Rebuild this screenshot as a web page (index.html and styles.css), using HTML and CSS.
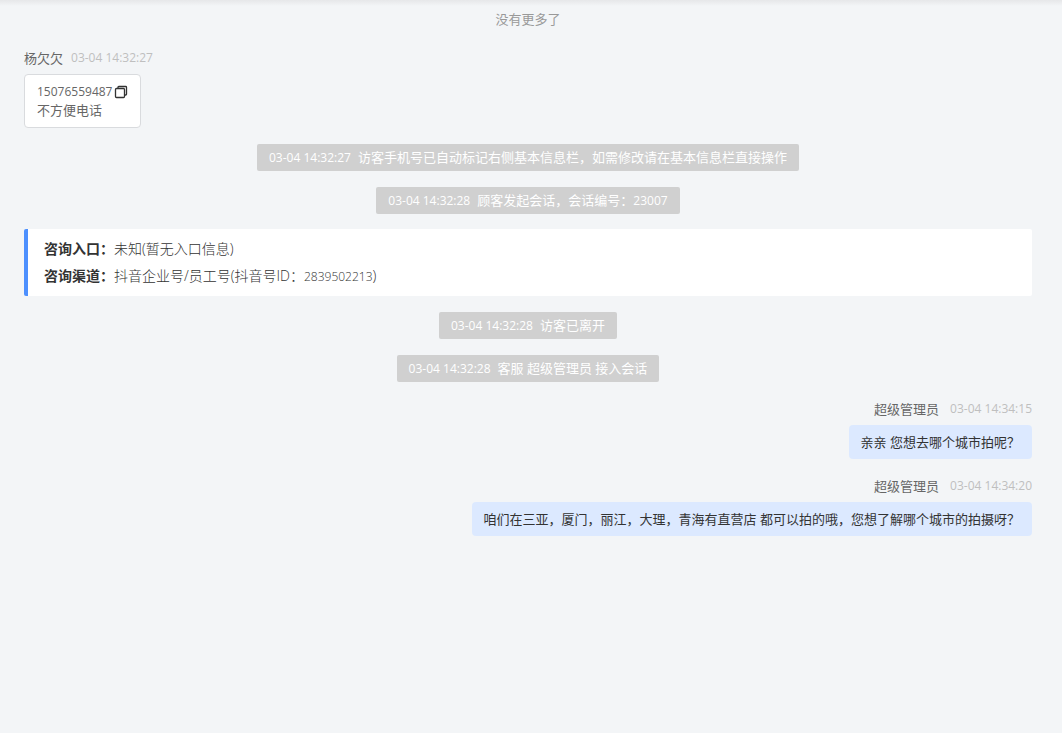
FILE: index.html
```html
<!DOCTYPE html>
<html lang="zh-CN">
<head>
  <meta charset="UTF-8">
  <title>会话记录</title>
  <link rel="stylesheet" href="styles.css">
</head>
<body>

  <main class="chat">
    <p class="no-more">没有更多了</p>

    <div class="message">
      <div class="meta">
        <span class="name">杨欠欠</span>
        <time>03-04 14:32:27</time>
      </div>
      <div class="bubble visitor">
        <div class="phone">
          <span class="num">15076559487</span>
          <button type="button" class="copy" aria-label="复制">
            <svg width="14" height="14" viewBox="0 0 14 14" fill="none" stroke="#333" stroke-width="1.3">
              <rect x="1.5" y="3.5" width="9" height="9" rx="1"/>
              <path d="M4 3.5V2.3Q4 1.5 4.8 1.5H11.7Q12.5 1.5 12.5 2.3V9.2Q12.5 10 11.7 10H10.5"/>
            </svg>
          </button>
        </div>
        <div>不方便电话</div>
      </div>
    </div>

    <div class="notice"><time>03-04 14:32:27</time>访客手机号已自动标记右侧基本信息栏，如需修改请在基本信息栏直接操作</div>
    <div class="notice"><time>03-04 14:32:28</time>顾客发起会话，会话编号：<span class="num">23007</span></div>

    <dl class="info">
      <div class="info-row">
        <dt>咨询入口：</dt>
        <dd>未知(暂无入口信息)</dd>
      </div>
      <div class="info-row">
        <dt>咨询渠道：</dt>
        <dd>抖音企业号/员工号(抖音号ID：<span class="num">2839502213</span>)</dd>
      </div>
    </dl>

    <div class="notice"><time>03-04 14:32:28</time>访客已离开</div>
    <div class="notice"><time>03-04 14:32:28</time>客服 超级管理员 接入会话</div>

    <div class="message mine">
      <div class="meta">
        <span class="name">超级管理员</span>
        <time>03-04 14:34:15</time>
      </div>
      <div class="bubble">亲亲 您想去哪个城市拍呢？</div>
    </div>

    <div class="message mine">
      <div class="meta">
        <span class="name">超级管理员</span>
        <time>03-04 14:34:20</time>
      </div>
      <div class="bubble">咱们在三亚，厦门，丽江，大理，青海有直营店 都可以拍的哦，您想了解哪个城市的拍摄呀？</div>
    </div>
  </main>

</body>
</html>
```

FILE: styles.css
```css
* { box-sizing: border-box; }
body {
  margin: 0;
  min-height: 100vh;
  background: linear-gradient(#e6e7e9, #f3f5f7 6px) no-repeat #f3f5f7;
  color: #333;
  font-family: "Open Sans", "Noto Sans CJK SC", sans-serif;
  font-size: 13px;
  line-height: 18px;
}
.chat {
  display: flex;
  flex-direction: column;
  align-items: flex-start;
  gap: 16px;
  padding: 10px 30px 16px 24px;
}
.no-more { align-self: center; margin: 0 0 3px; color: #999; }

time, .num { font-size: 12px; line-height: 1; }
time { display: inline-block; min-width: 85px; }

.message { display: flex; flex-direction: column; align-items: flex-start; gap: 5px; }
.message.mine { align-self: flex-end; align-items: flex-end; }
.meta { display: flex; align-items: center; gap: 8px; line-height: 22px; }
.name { color: #666; }
.meta time { color: #bfbfbf; }
.mine time { text-align: right; }

.bubble { padding: 8px 12px; border-radius: 4px; background: #dce9ff; }
.bubble.visitor { background: #fff; border: 1px solid #d9dbde; color: #666; }
.phone { display: flex; align-items: center; gap: 2px; height: 18px; }
.copy { display: flex; padding: 0; border: 0; background: none; cursor: pointer; }

.notice {
  align-self: center;
  padding: 4px 12px;
  border-radius: 2px;
  background: #d0d0d0;
  color: #fff;
  line-height: 19px;
}
.notice time { margin-right: 4px; }

.info {
  align-self: stretch;
  margin: -1px 0 0;
  padding: 6px 16px 7px;
  border-left: 4px solid #4d90fe;
  border-radius: 2px;
  background: #fff;
  font-size: 14px;
  line-height: 27px;
}
.info-row { display: flex; }
dt { font-weight: 700; }
dd { margin: 0; font-weight: 300; }
```
